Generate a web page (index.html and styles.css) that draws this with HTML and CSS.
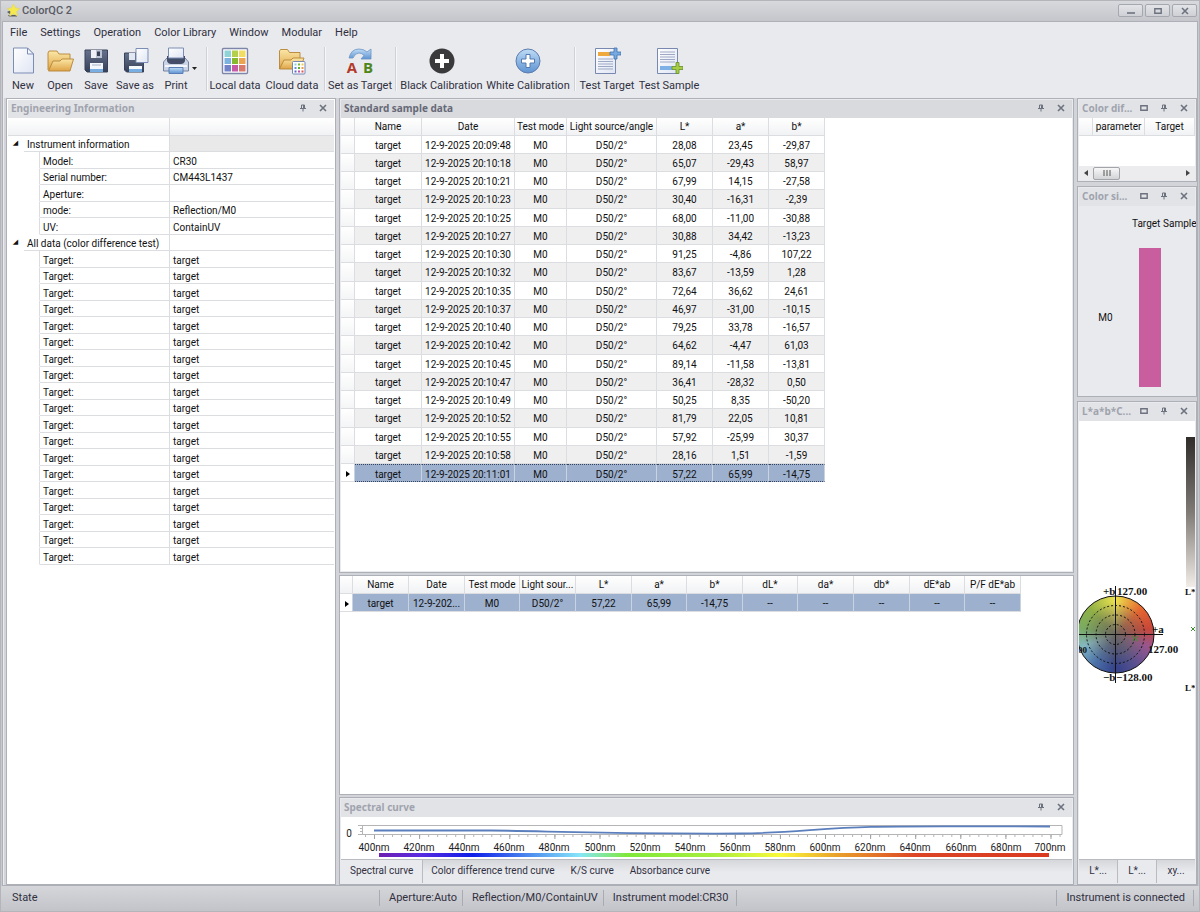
FILE: index.html
```html
<!DOCTYPE html>
<html lang="en">
<head>
<meta charset="utf-8">
<title>ColorQC 2</title>
<link rel="stylesheet" href="styles.css">
</head>
<body>
<svg width="0" height="0" class="defs" aria-hidden="true">
  <defs>
    <linearGradient id="paper" x1="0" y1="0" x2="1" y2="1"><stop offset="0" stop-color="#fff"/><stop offset="1" stop-color="#dfe5f3"/></linearGradient>
    <linearGradient id="gold" x1="0" y1="0" x2="0" y2="1"><stop offset="0" stop-color="#fbe7a6"/><stop offset="1" stop-color="#dfa447"/></linearGradient>
    <linearGradient id="navy" x1="0" y1="0" x2="0" y2="1"><stop offset="0" stop-color="#66728c"/><stop offset="1" stop-color="#363f58"/></linearGradient>
    <linearGradient id="sky" x1="0" y1="0" x2="0" y2="1"><stop offset="0" stop-color="#bfdcf6"/><stop offset="1" stop-color="#5e93d2"/></linearGradient>
    <symbol id="pin" viewBox="0 0 8 8"><path d="M2.500 1h3v3.500h-3zM1 4.500h6M4 5v2.500" fill="none" stroke="#6d727f"/><path d="M4 1h2v3.500H4z" fill="#6d727f"/></symbol>
    <symbol id="close" viewBox="0 0 8 8"><path d="M1 1l6 6M7 1l-6 6" stroke="#6d727f" stroke-width="1.600"/></symbol>
    <symbol id="max" viewBox="0 0 8 8"><path d="M.8 1.800h6.400v4.400H.8z" fill="none" stroke="#6d727f" stroke-width="1.400"/></symbol>
    <symbol id="min" viewBox="0 0 8 8"><path d="M0 6h8" stroke="#6d727f" stroke-width="1.600"/></symbol>
  </defs>
</svg>
<div class="window">
  <header class="titlebar">
    <svg width="13" height="13" viewBox="0 0 13 13"><path d="M0 8l4-2v5zM1 11h9v1.500H2z" fill="#5a5c62"/><path d="M6.500 0l1.900 4 4.300.5-3.200 3 .8 4.400-3.800-2.100L2.700 12l.8-4.500L.3 4.500l4.300-.5z" fill="#f4ea50" stroke="#e2d650" stroke-width=".6"/></svg>
    <h1 class="app-name">ColorQC 2</h1>
    <div class="win-buttons">
      <button aria-label="Minimize"><svg width="8" height="8"><use href="#min"/></svg></button>
      <button aria-label="Maximize"><svg width="8" height="8"><use href="#max"/></svg></button>
      <button aria-label="Close"><svg width="8" height="8"><use href="#close"/></svg></button>
    </div>
  </header>

  <div class="frame">
    <nav class="menu">
      <button>File</button><button>Settings</button><button>Operation</button><button>Color Library</button><button>Window</button><button>Modular</button><button>Help</button>
    </nav>

    <div class="toolbar">
      <button class="tool"><svg width="28" height="28" viewBox="0 0 28 28"><path d="M4.500 1h14l6 6v19h-20z" fill="url(#paper)" stroke="#7c8db5"/><path d="M18.500 1v6h6z" fill="#f5f8ff" stroke="#7c8db5"/></svg>New</button>
      <button class="tool"><svg width="28" height="28" viewBox="0 0 28 28"><path d="M2 23V6l1-2h8l2 3h11v5" fill="url(#gold)" stroke="#b58335" stroke-width=".9"/><path d="M2.500 24L7 14h7l2-2h11.500l-3.500 12z" fill="url(#gold)" stroke="#b58335" stroke-width=".9"/></svg>Open</button>
      <button class="tool"><svg width="28" height="28" viewBox="0 0 28 28"><path d="M3 3h22.500v22H5l-2-2z" fill="url(#navy)" stroke="#39425b"/><path d="M9 3h11v8H9z" fill="#b9c3d4"/><path d="M9 3h5v8H9z" fill="#eef2f8"/><path d="M15 4.500h3V9h-3z" fill="#3b4258"/><path d="M8 16h13v9H8z" fill="#f4f7fc"/><path d="M8 22h13v3H8z" fill="#78aee2"/><path d="M10 18h9" stroke="#a9b3c4"/></svg>Save</button>
      <button class="tool"><svg width="28" height="28" viewBox="0 0 28 28"><path d="M3.500 6h19v19H5.500l-2-2z" fill="url(#navy)" stroke="#39425b"/><path d="M8 6h6v7H8z" fill="#e2e8f1"/><path d="M8 19h13v6H8z" fill="#f4f7fc"/><path d="M8 22h13v3H8z" fill="#78aee2"/><path d="M15 1.500h12v14H15z" fill="url(#paper)" stroke="#7c8db5"/></svg>Save as</button>
      <button class="tool"><svg width="28" height="28" viewBox="0 0 28 28"><path d="M5 11h18l3.500 4v9h-25v-9z" fill="#cbd4e6" stroke="#7480a0"/><path d="M5 9h18v5q-1 3-4 3H9q-3 0-4-3z" fill="#434d68"/><path d="M6.500 1h15v10h-15z" fill="url(#paper)" stroke="#7c8db5"/><path d="M3 19h22" stroke="#f3f6fb" stroke-width="2"/><path d="M7 20.500h14v6H7z" fill="url(#sky)" stroke="#5a7fb4"/></svg>Print<svg class="drop" width="5" height="3"><path d="M0 0h5L2.500 3z" fill="#222"/></svg></button>
      <span class="sep end-sep"></span>
      <button class="tool"><svg width="28" height="28" viewBox="0 0 28 28"><rect x="1.500" y="1.500" width="25" height="25" rx="1" fill="#fff" stroke="#7d86a8" stroke-width="1.400"/><path fill="#8fd3d6" d="M3.500 3.500H10V10H3.500z"/><path fill="#b3cf4c" d="M11 3.500h6V10h-6z"/><path fill="#f0dd62" d="M18 3.500h6.500V10H18z"/><path fill="#7db1de" d="M3.500 11H10v6H3.500z"/><path fill="#86b92e" d="M11 11h6v6h-6z"/><path fill="#eba452" d="M18 11h6.500v6H18z"/><path fill="#7282c9" d="M3.500 18H10v6.500H3.500z"/><path fill="#c75aa6" d="M11 18h6v6.500h-6z"/><path fill="#d97a6e" d="M18 18h6.500v6.500H18z"/></svg>Local data</button>
      <button class="tool"><svg width="28" height="28" viewBox="0 0 28 28"><path d="M1.500 22V4l1-1.500h7l2 3H22V13" fill="url(#gold)" stroke="#b58335" stroke-width=".9"/><path d="M1.500 22L6 13h7l2-2h11l-4 11z" fill="url(#gold)" stroke="#b58335" stroke-width=".9"/><rect x="14.500" y="14.500" width="12.500" height="12.500" rx="1" fill="#fff" stroke="#7588b4"/><path fill="#86d0e0" d="M16.500 16.500h2v2h-2z"/><path fill="#7bbb3a" d="M20 16.500h2v2h-2z"/><path fill="#edcf4a" d="M23.500 16.500h2v2h-2z"/><path fill="#5e8fdc" d="M16.500 20h2v2h-2z"/><path fill="#5fae2e" d="M20 20h2v2h-2z"/><path fill="#ee9a3e" d="M23.500 20h2v2h-2z"/><path fill="#5a68c8" d="M16.500 23.500h2v2h-2z"/><path fill="#bf4fb0" d="M20 23.500h2v2h-2z"/><path fill="#e0574e" d="M23.500 23.500h2v2h-2z"/></svg>Cloud data</button>
      <span class="sep"></span>
      <button class="tool"><svg class="spill" width="28" height="28" viewBox="0 0 28 28"><path d="M3 11Q5 2 13 2q5 0 8 3l4-3v10H15l3-3.500Q16 6 13 6q-4 0-6 5z" fill="url(#sky)" stroke="#6b94c4" stroke-width=".8"/><text class="mark red" x="6" y="26">A</text><text class="mark green" x="22" y="26">B</text></svg>Set as Target</button>
      <span class="sep"></span>
      <button class="tool"><svg width="28" height="28" viewBox="0 0 28 28"><circle cx="14" cy="14" r="12.500" fill="#3a3a3c"/><path d="M14 7v14M7 14h14" stroke="#fff" stroke-width="4"/></svg>Black Calibration</button>
      <button class="tool"><svg width="28" height="28" viewBox="0 0 28 28"><circle cx="14" cy="14" r="12" fill="url(#sky)" stroke="#5d7dac"/><path d="M12 7.500h4V12h4.500v4H16v4.500h-4V16H7.500v-4H12z" fill="#fff" stroke="#527bb2"/></svg>White Calibration</button>
      <span class="sep"></span>
      <button class="tool"><svg width="28" height="28" viewBox="0 0 28 28"><path d="M2.500 1.500h20v25h-20z" fill="url(#paper)" stroke="#7888ae"/><path d="M5 5h12v4H5z" fill="#efa83d"/><path d="M5 12h15M5 14.500h15M5 17h15M5 19.500h15M5 22h15" stroke="#9da9c4"/><path d="M21 1h3v4h4v3h-4v4h-3V8h-4V5h4z" fill="#77aae0" stroke="#3f71b1" stroke-width=".8"/></svg>Test Target</button>
      <button class="tool"><svg width="28" height="28" viewBox="0 0 28 28"><path d="M2.500 1.500h20v25h-20z" fill="url(#paper)" stroke="#7888ae"/><path d="M5 5h15M5 7.500h15M5 10h15M5 12.500h15M5 15h15" stroke="#9da9c4"/><path d="M5 19h12v4H5z" fill="#7eb0e8"/><path d="M21 15.500h3v4h4v3h-4v4h-3v-4h-4v-3h4z" fill="#a5ce45" stroke="#648e24" stroke-width=".8"/></svg>Test Sample</button>
    </div>

    <main class="docks">
      <section class="panel left">
        <header class="cap"><h2>Engineering Information</h2><button aria-label="Pin"><svg width="8" height="8"><use href="#pin"/></svg></button><button aria-label="Close panel"><svg width="8" height="8"><use href="#close"/></svg></button></header>
        <table class="tree">
          <colgroup><col class="c16"><col class="c16"><col class="c130"><col></colgroup>
          <thead><tr><th colspan="3"></th><th></th></tr></thead>
          <tbody>
          <tr><td class="exp">◢</td><td colspan="2" class="group">Instrument information</td><td class="shade"></td></tr>
          <tr><td></td><td></td><td>Model:</td><td>CR30</td></tr>
          <tr><td></td><td></td><td>Serial number:</td><td>CM443L1437</td></tr>
          <tr><td></td><td></td><td>Aperture:</td><td></td></tr>
          <tr><td></td><td></td><td>mode:</td><td>Reflection/M0</td></tr>
          <tr><td></td><td></td><td>UV:</td><td>ContainUV</td></tr>
          <tr><td class="exp">◢</td><td colspan="2" class="group">All data (color difference test)</td><td></td></tr>
          <tr><td></td><td></td><td>Target:</td><td>target</td></tr>
          <tr><td></td><td></td><td>Target:</td><td>target</td></tr>
          <tr><td></td><td></td><td>Target:</td><td>target</td></tr>
          <tr><td></td><td></td><td>Target:</td><td>target</td></tr>
          <tr><td></td><td></td><td>Target:</td><td>target</td></tr>
          <tr><td></td><td></td><td>Target:</td><td>target</td></tr>
          <tr><td></td><td></td><td>Target:</td><td>target</td></tr>
          <tr><td></td><td></td><td>Target:</td><td>target</td></tr>
          <tr><td></td><td></td><td>Target:</td><td>target</td></tr>
          <tr><td></td><td></td><td>Target:</td><td>target</td></tr>
          <tr><td></td><td></td><td>Target:</td><td>target</td></tr>
          <tr><td></td><td></td><td>Target:</td><td>target</td></tr>
          <tr><td></td><td></td><td>Target:</td><td>target</td></tr>
          <tr><td></td><td></td><td>Target:</td><td>target</td></tr>
          <tr><td></td><td></td><td>Target:</td><td>target</td></tr>
          <tr><td></td><td></td><td>Target:</td><td>target</td></tr>
          <tr><td></td><td></td><td>Target:</td><td>target</td></tr>
          <tr><td></td><td></td><td>Target:</td><td>target</td></tr>
          <tr><td></td><td></td><td>Target:</td><td>target</td></tr>
          </tbody>
        </table>
      </section>

      <div class="center">
        <section class="panel standard">
          <header class="cap active"><h2>Standard sample data</h2><button aria-label="Pin"><svg width="8" height="8"><use href="#pin"/></svg></button><button aria-label="Close panel"><svg width="8" height="8"><use href="#close"/></svg></button></header>
          <div class="gridbox">
          <table class="grid">
            <colgroup><col class="c14"><col class="c67"><col class="c93"><col class="c52"><col class="c90"><col class="c56"><col class="c56"><col class="c56"></colgroup>
            <thead><tr><th></th><th>Name</th><th>Date</th><th>Test mode</th><th>Light source/angle</th><th>L*</th><th>a*</th><th>b*</th></tr></thead>
            <tbody>
            <tr><td></td><td>target</td><td>12-9-2025 20:09:48</td><td>M0</td><td>D50/2°</td><td>28,08</td><td>23,45</td><td>-29,87</td></tr>
            <tr><td></td><td>target</td><td>12-9-2025 20:10:18</td><td>M0</td><td>D50/2°</td><td>65,07</td><td>-29,43</td><td>58,97</td></tr>
            <tr><td></td><td>target</td><td>12-9-2025 20:10:21</td><td>M0</td><td>D50/2°</td><td>67,99</td><td>14,15</td><td>-27,58</td></tr>
            <tr><td></td><td>target</td><td>12-9-2025 20:10:23</td><td>M0</td><td>D50/2°</td><td>30,40</td><td>-16,31</td><td>-2,39</td></tr>
            <tr><td></td><td>target</td><td>12-9-2025 20:10:25</td><td>M0</td><td>D50/2°</td><td>68,00</td><td>-11,00</td><td>-30,88</td></tr>
            <tr><td></td><td>target</td><td>12-9-2025 20:10:27</td><td>M0</td><td>D50/2°</td><td>30,88</td><td>34,42</td><td>-13,23</td></tr>
            <tr><td></td><td>target</td><td>12-9-2025 20:10:30</td><td>M0</td><td>D50/2°</td><td>91,25</td><td>-4,86</td><td>107,22</td></tr>
            <tr><td></td><td>target</td><td>12-9-2025 20:10:32</td><td>M0</td><td>D50/2°</td><td>83,67</td><td>-13,59</td><td>1,28</td></tr>
            <tr><td></td><td>target</td><td>12-9-2025 20:10:35</td><td>M0</td><td>D50/2°</td><td>72,64</td><td>36,62</td><td>24,61</td></tr>
            <tr><td></td><td>target</td><td>12-9-2025 20:10:37</td><td>M0</td><td>D50/2°</td><td>46,97</td><td>-31,00</td><td>-10,15</td></tr>
            <tr><td></td><td>target</td><td>12-9-2025 20:10:40</td><td>M0</td><td>D50/2°</td><td>79,25</td><td>33,78</td><td>-16,57</td></tr>
            <tr><td></td><td>target</td><td>12-9-2025 20:10:42</td><td>M0</td><td>D50/2°</td><td>64,62</td><td>-4,47</td><td>61,03</td></tr>
            <tr><td></td><td>target</td><td>12-9-2025 20:10:45</td><td>M0</td><td>D50/2°</td><td>89,14</td><td>-11,58</td><td>-13,81</td></tr>
            <tr><td></td><td>target</td><td>12-9-2025 20:10:47</td><td>M0</td><td>D50/2°</td><td>36,41</td><td>-28,32</td><td>0,50</td></tr>
            <tr><td></td><td>target</td><td>12-9-2025 20:10:49</td><td>M0</td><td>D50/2°</td><td>50,25</td><td>8,35</td><td>-50,20</td></tr>
            <tr><td></td><td>target</td><td>12-9-2025 20:10:52</td><td>M0</td><td>D50/2°</td><td>81,79</td><td>22,05</td><td>10,81</td></tr>
            <tr><td></td><td>target</td><td>12-9-2025 20:10:55</td><td>M0</td><td>D50/2°</td><td>57,92</td><td>-25,99</td><td>30,37</td></tr>
            <tr><td></td><td>target</td><td>12-9-2025 20:10:58</td><td>M0</td><td>D50/2°</td><td>28,16</td><td>1,51</td><td>-1,59</td></tr>
            <tr class="selected focus"><td><svg width="4" height="6"><path d="M0 0l4 3-4 3z"/></svg></td><td>target</td><td>12-9-2025 20:11:01</td><td>M0</td><td>D50/2°</td><td>57,22</td><td>65,99</td><td>-14,75</td></tr>
            </tbody>
          </table>
          </div>
        </section>

        <section class="panel bare compare">
          <div class="gridbox">
          <table class="grid">
            <colgroup><col class="c13"><col class="c56"><col class="c56"><col class="c55"><col class="c56"><col class="c56"><col class="c55"><col class="c56"><col class="c55"><col class="c56"><col class="c56"><col class="c55"><col class="c56"></colgroup>
            <thead><tr><th></th><th>Name</th><th>Date</th><th>Test mode</th><th>Light sour...</th><th>L*</th><th>a*</th><th>b*</th><th>dL*</th><th>da*</th><th>db*</th><th>dE*ab</th><th>P/F dE*ab</th></tr></thead>
            <tbody><tr class="selected"><td><svg width="4" height="6"><path d="M0 0l4 3-4 3z"/></svg></td><td>target</td><td>12-9-202...</td><td>M0</td><td>D50/2°</td><td>57,22</td><td>65,99</td><td>-14,75</td><td>--</td><td>--</td><td>--</td><td>--</td><td>--</td></tr></tbody>
          </table>
          </div>
        </section>

        <section class="panel spectral">
          <header class="cap"><h2>Spectral curve</h2><button aria-label="Pin"><svg width="8" height="8"><use href="#pin"/></svg></button><button aria-label="Close panel"><svg width="8" height="8"><use href="#close"/></svg></button></header>
          <div class="chart">
            <svg width="730" height="42" viewBox="0 0 730 42">
              <defs><linearGradient id="spectrum"><stop offset="0" stop-color="#6d1fb0"/><stop offset=".06" stop-color="#5a2be0"/><stop offset=".14" stop-color="#0f1fe8"/><stop offset=".22" stop-color="#4a86ee"/><stop offset=".3" stop-color="#86e6f8"/><stop offset=".37" stop-color="#7fe83a"/><stop offset=".5" stop-color="#a8ee3c"/><stop offset=".6" stop-color="#fbf93a"/><stop offset=".68" stop-color="#e9a42c"/><stop offset=".8" stop-color="#dc4526"/><stop offset="1" stop-color="#d93a20"/></linearGradient></defs>
              <path d="M17 8.500h704v9H17M21.500 8v9M19 11.500h3M19 14.500h3" fill="none" stroke="#b5b5b8"/>
              <path d="M24 19h697" stroke="#b5b5b8" stroke-width="2" stroke-dasharray="1 8.020"/>
              <path d="M33 20h678" stroke="#a0a0a4" stroke-width="4" stroke-dasharray="1 44.100"/>
              <path d="M33 13.500H150C210 14 250 17 400 16.500C450 16 480 11 530 9.800C570 8.800 640 9.500 709 9.500" fill="none" stroke="#5b7fbd" stroke-width="1.800"/>
              <rect x="38" y="36" width="670" height="4" fill="url(#spectrum)"/>
              <g class="axis"><text x="8" y="20">0</text><text x="33" y="34">400nm</text><text x="78" y="34">420nm</text><text x="123" y="34">440nm</text><text x="168" y="34">460nm</text><text x="213" y="34">480nm</text><text x="259" y="34">500nm</text><text x="304" y="34">520nm</text><text x="349" y="34">540nm</text><text x="394" y="34">560nm</text><text x="439" y="34">580nm</text><text x="484" y="34">600nm</text><text x="529" y="34">620nm</text><text x="574" y="34">640nm</text><text x="620" y="34">660nm</text><text x="665" y="34">680nm</text><text x="709" y="34">700nm</text></g>
            </svg>
          </div>
          <div class="tabs"><button class="tab on">Spectral curve</button><button class="tab">Color difference trend curve</button><button class="tab">K/S curve</button><button class="tab">Absorbance curve</button></div>
        </section>
      </div>

      <div class="right">
        <section class="panel diff">
          <header class="cap"><h2>Color dif...</h2><button aria-label="Maximize panel"><svg width="8" height="8"><use href="#max"/></svg></button><button aria-label="Pin"><svg width="8" height="8"><use href="#pin"/></svg></button><button aria-label="Close panel"><svg width="8" height="8"><use href="#close"/></svg></button></header>
          <div class="gridbox">
            <table class="grid">
              <colgroup><col class="c14"><col class="c52"><col></colgroup>
              <thead><tr><th></th><th>parameter</th><th>Target</th></tr></thead>
            </table>
          </div>
          <div class="scroll"><button aria-label="Scroll left"><svg width="4" height="6"><path d="M4 0v6L0 3z" fill="#444"/></svg></button><button class="thumb" aria-label="Scroll position"><svg width="8" height="6"><path d="M1 0v6M4 0v6M7 0v6" stroke="#555"/></svg></button><button class="end" aria-label="Scroll right"><svg width="4" height="6"><path d="M0 0v6l4-3z" fill="#444"/></svg></button></div>
        </section>

        <section class="panel sim">
          <header class="cap"><h2>Color si...</h2><button aria-label="Maximize panel"><svg width="8" height="8"><use href="#max"/></svg></button><button aria-label="Pin"><svg width="8" height="8"><use href="#pin"/></svg></button><button aria-label="Close panel"><svg width="8" height="8"><use href="#close"/></svg></button></header>
          <div class="swatches">
            <span></span><span class="head">Target</span><span class="head">Sample</span>
            <span class="mode">M0</span><span class="swatch"></span>
          </div>
        </section>

        <section class="panel lab">
          <header class="cap"><h2>L*a*b*C...</h2><button aria-label="Maximize panel"><svg width="8" height="8"><use href="#max"/></svg></button><button aria-label="Pin"><svg width="8" height="8"><use href="#pin"/></svg></button><button aria-label="Close panel"><svg width="8" height="8"><use href="#close"/></svg></button></header>
          <div class="plot">
            <svg width="117" height="300" viewBox="0 0 117 300">
              <defs><linearGradient id="light" x2="0" y2="1"><stop offset="0" stop-color="#2f2c29"/><stop offset=".5" stop-color="#7f7a76"/><stop offset="1" stop-color="#f1ece8"/></linearGradient></defs>
              <rect x="107" y="16" width="9" height="150" fill="url(#light)"/>
              <foreignObject x="-2" y="175" width="77" height="77"><div class="wheel"></div></foreignObject>
              <g fill="none" stroke="#111"><circle cx="36.500" cy="213.500" r="38.500"/><g stroke-dasharray="2 2"><circle cx="36.500" cy="213.500" r="29"/><circle cx="36.500" cy="213.500" r="19.500"/><circle cx="36.500" cy="213.500" r="10"/></g><path d="M36.500 165v97M0 213.500h84"/></g>
              <g stroke="#3f8f2f"><path d="M53 215l6 5M59 215l-6 5M112 206l4 4M116 206l-4 4"/></g>
              <g class="coords"><text x="24" y="174">+b</text><text x="38" y="174">127.00</text><text x="24" y="260">−b</text><text x="37" y="260">−128.00</text><text x="73" y="212">+a</text><text x="69" y="232">127.00</text><text x="-1" y="232" class="small">00</text><text x="106" y="174" class="small">L*</text><text x="106" y="270" class="small">L*</text></g>
            </svg>
          </div>
          <div class="tabs"><button class="tab">L*...</button><button class="tab on">L*...</button><button class="tab">xy...</button></div>
        </section>
      </div>
    </main>
  </div>

  <footer class="status"><span class="state">State</span><span class="cell">Aperture:Auto</span><span class="cell">Reflection/M0/ContainUV</span><span class="cell last">Instrument model:CR30</span><span class="cell conn">Instrument is connected</span></footer>
</div>
</body>
</html>
```

FILE: styles.css
```css
* { box-sizing: border-box; }
body { margin: 0; font: 11px/16px Roboto, "Noto Sans", sans-serif; color: #30303f; }
button { font: inherit; color: inherit; background: none; border: 0; padding: 0; margin: 0; }
svg { display: block; flex: none; }
.defs { position: absolute; }

.window { display: flex; flex-direction: column; height: 100vh; min-height: 640px; overflow: hidden; background: #c8c9ce; border: 1px solid #b4b5bb; }
.titlebar { display: flex; align-items: center; gap: 2px; height: 20px; flex: none; padding: 0 2px 1px 6px; background: linear-gradient(#d8d9dd, #c5c6cb); }
.app-name { margin: 0; flex: 1; font-size: 11px; font-weight: 500; color: #585a64; }
.win-buttons { display: flex; gap: 2px; }
.win-buttons button { display: grid; place-items: center; width: 25px; height: 13px; border: 1px solid #a6a8b0; border-radius: 2px; background: linear-gradient(#e3e4e8, #cfd0d5); }

.frame { display: flex; flex-direction: column; flex: 1; min-height: 0; margin: 0 1px; padding: 0 0 0 1px; background: #e9eaee; border: 1px solid #aeb0b8; }
.menu { display: flex; gap: 13px; height: 20px; flex: none; padding: 1px 6px 0; align-items: center; }
.toolbar { display: grid; grid-template-columns: 38px 36px 36px 42px 40px 12px 54px 60px 5px 66px 6px 85px 88px 6px 58px 66px; height: 56px; flex: none; padding-top: 5px; }
.tool { position: relative; display: flex; flex-direction: column; align-items: center; gap: 3px; white-space: nowrap; }
.drop { position: absolute; right: -1px; top: 20px; }
.spill { overflow: visible; }
.mark { font: bold 15px "Open Sans", sans-serif; text-anchor: middle; }
.red { fill: #b23a2b; }
.green { fill: #4f861a; }
.sep { justify-self: center; width: 2px; height: 44px; border-left: 1px solid #cfd1d7; border-right: 1px solid #f6f7f9; }
.end-sep { justify-self: end; }

.docks { display: flex; gap: 3px; flex: 1; min-height: 0; background: #d3d4da; }
.panel { display: flex; flex-direction: column; min-height: 0; border: 1px solid #aeb0b8; padding: 1px; background: #e9eaee; overflow: hidden; }
.left { width: 330px; flex: none; margin-left: 2px; }
.center { display: flex; flex-direction: column; gap: 2px; flex: 1; min-width: 0; }
.right { display: flex; flex-direction: column; gap: 4px; width: 120px; flex: none; }
.standard { flex: 1; }
.compare { height: 220px; flex: none; }
.bare { padding: 0; }
.spectral { height: 88px; flex: none; }
.diff { height: 84px; flex: none; }
.sim { height: 211px; flex: none; }
.lab { flex: 1; }

.cap { display: flex; align-items: center; height: 18px; flex: none; padding: 0 5px 2px 3px; background: #e2e3e6; }
.cap.active { background: #d9dade; }
.cap h2 { flex: 1; margin: 0; font: bold 10px/16px "Noto Sans", "DejaVu Sans", sans-serif; color: #a0a3ae; white-space: nowrap; }
.cap.active h2 { color: #666977; }
.cap button { display: grid; place-items: center; width: 20px; height: 14px; }
.cap button:last-child { margin-right: -4px; }

table { border-collapse: separate; border-spacing: 0; table-layout: fixed; font: 10px/14px Roboto, "Noto Sans", sans-serif; color: #111; }
th, td { padding: 1px 0 0; font-weight: normal; border-right: 1px solid #dcdde0; border-bottom: 1px solid #dcdde0; white-space: nowrap; overflow: hidden; }
th { background: linear-gradient(#fff, #f1f2f4); }
.c13 { width: 13px; } .c14 { width: 14px; } .c16 { width: 16px; } .c52 { width: 52px; }
.c55 { width: 55px; } .c56 { width: 56px; } .c67 { width: 67px; }
.c90 { width: 90px; } .c93 { width: 93px; } .c130 { width: 130px; }

.left { background: #fff; }
.tree { width: 100%; }
.tree tr { height: 16px; }
.tree tr:nth-child(even) { height: 17px; }
.tree thead tr { height: 18px; }
.tree td { padding: 2px 0 0 3px; line-height: 13px; }
.tree td:nth-child(-n+2):not([colspan]) { border-bottom-color: #fff; padding: 0; }
.tree td:first-child { border-right-color: #fff; }
.tree td:last-child, .tree th:last-child { border-right: 0; }
.tree .exp { font: 7px/13px "DejaVu Sans", sans-serif; text-align: center; }
.tree .shade { background: #e9e9ea; }

.gridbox { flex: 1; min-height: 0; background: #fff; overflow: hidden; }
.grid { width: 1px; text-align: center; }
.grid thead { height: 18px; }
.grid tbody tr { height: 18px; }
.grid tbody tr:nth-child(4n) { height: 19px; }
.grid tbody td { padding-top: 2px; }
.grid tbody tr:nth-child(even) { background: #efeff0; }
.grid tbody td:first-child { background: linear-gradient(#fff, #f4f5f6); }
.grid td svg { margin-left: 5px; }
.grid .selected td { background: #9db0ce; border-right-color: #c9d2e1; }
.grid .selected td:first-child { background: #fff; }
.focus td:not(:first-child) { border-top: 1px dotted #34425c; border-bottom: 1px dotted #34425c; line-height: 13px; }
.diff .grid { width: 100%; }

.scroll { display: flex; align-items: center; gap: 5px; height: 14px; flex: none; padding: 0 5px; background: #ececee; }
.thumb { display: grid; place-items: center; width: 27px; height: 13px; border: 1px solid #a2a4a9; border-radius: 2px; background: linear-gradient(#f7f7f8, #d3d4d7); }
.end { margin-left: auto; }

.swatches { display: grid; grid-template-columns: 53px 31px 1fr; grid-template-rows: 29px 139px; row-gap: 13px; font: 10px/14px Roboto, sans-serif; color: #111; flex: 1; align-content: start; }
.head { align-self: end; padding-bottom: 4px; }
.mode { place-self: center; }
.swatch { width: 22px; margin-left: 7px; background: #c95e9f; }

.chart { flex: 1; min-height: 42px; background: #fff; overflow: hidden; }
.axis { font: 10px Roboto, sans-serif; fill: #222; text-anchor: middle; }
.plot { flex: 1; min-height: 0; background: #fff; overflow: hidden; }
.wheel { width: 77px; height: 77px; border-radius: 50%; background: radial-gradient(circle closest-side, #6c6660 0%, #6c666099 35%, #6c666000 85%), conic-gradient(#ece24e, #e5662f 45deg, #c9473a 80deg, #99568f 110deg, #54508f 150deg, #34418a 180deg, #4a70a8 215deg, #84b9c4 250deg, #7aab62 280deg, #8fb046 315deg, #ece24e); }
.coords { font: bold 11px "Liberation Serif", serif; fill: #111; }
.small { font-size: 9px; }

.tabs { display: flex; height: 24px; flex: none; font: 10px/22px Roboto, sans-serif; background: linear-gradient(#d6d7db, #e9eaee 12px); border-top: 1px solid #b9bbc1; }
.tab { padding: 0 8px 1px; }
.tab.on { padding: 0 9px 1px; background: #e9eaee; border-right: 1px solid #b9bbc1; }
.lab .tab { flex: 1; padding: 0 0 1px; }
.lab .tab.on { border-left: 1px solid #b9bbc1; }

.status { display: flex; align-items: center; height: 25px; flex: none; padding: 0 5px 1px 11px; background: linear-gradient(#d5d6da, #c3c4c9); white-space: nowrap; }
.state { flex: 0 0 367px; }
.cell { padding: 0 5px 0 9px; border-left: 1px solid #a9abb2; }
.last, .conn { padding-right: 8px; border-right: 1px solid #a9abb2; }
.conn { margin-left: auto; }
```
